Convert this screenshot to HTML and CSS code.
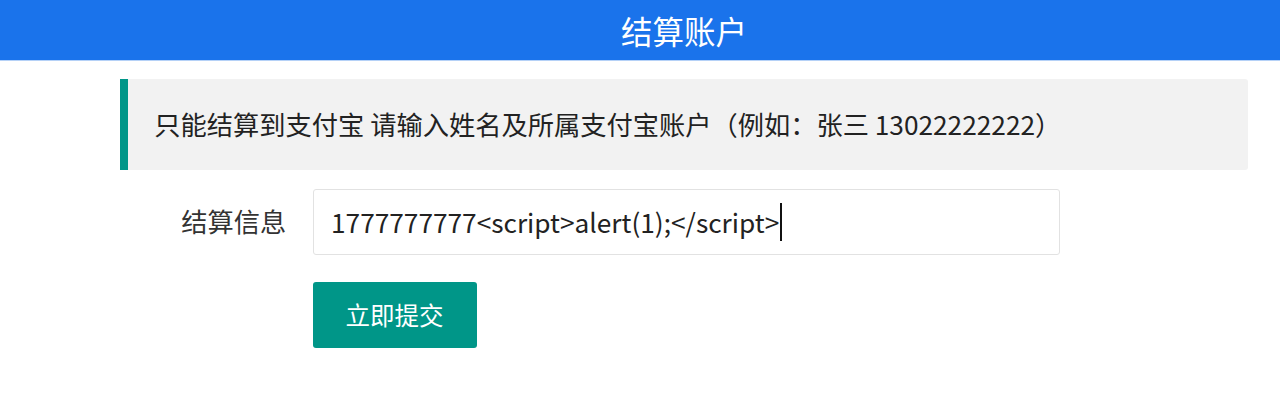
FILE: index.html
```html
<!DOCTYPE html>
<html lang="zh-CN">
<head>
<meta charset="utf-8">
<title>结算账户</title>
<link rel="stylesheet" href="styles.css">
</head>
<body>
<header class="topbar"><div class="topbar-inner">结算账户</div></header>
<main class="content">
  <blockquote class="quote">只能结算到支付宝 请输入姓名及所属支付宝账户（例如：张三 13022222222）</blockquote>
  <form class="form">
    <div class="form-item">
      <label class="form-label">结算信息</label>
      <div class="input-box"><span class="input-text">1777777777&lt;script&gt;alert(1);&lt;/script&gt;</span><span class="caret"></span></div>
    </div>
    <div class="form-item actions">
      <button type="button" class="btn">立即提交</button>
    </div>
  </form>
</main>
</body>
</html>
```
FILE: styles.css
```css
html, body {
  margin: 0;
  padding: 0;
  background: #fff;
}
body {
  font-family: "Noto Sans CJK SC", "Noto Sans", sans-serif;
  color: #333;
}
.topbar {
  height: 60px;
  line-height: 60px;
  background: #1a73eb;
  border-bottom: 1px solid #b5d1f7;
  color: #fff;
  font-size: 31.5px;
  padding: 0 32px 0 120px;
}
.topbar-inner {
  text-align: center;
}
.content {
  padding: 18px 32px 0 120px;
}
.quote {
  margin: 0 0 18.5px 0;
  padding: 26.25px;
  background: #f2f2f2;
  border-left: 8px solid #009688;
  border-radius: 0 3px 3px 0;
  font-size: 26.25px;
  line-height: 38.5px;
  color: #222;
}
.form {
  margin: 0;
}
.form-item {
  display: flex;
  align-items: center;
  margin-bottom: 26.5px;
}
.form-label {
  width: 140px;
  padding: 0 26.25px;
  text-align: right;
  font-size: 26.25px;
  line-height: 35px;
  color: #333;
}
.input-box {
  box-sizing: border-box;
  width: 747px;
  height: 66.5px;
  border: 1px solid #e2e2e2;
  border-radius: 3px;
  padding-left: 17.5px;
  display: flex;
  align-items: center;
  font-size: 26.25px;
  color: #222;
  background: #fff;
}
.caret {
  display: inline-block;
  width: 1.5px;
  height: 38px;
  background: #111;
  margin-left: 1px;
}
.actions {
  padding-left: 192.5px;
}
.btn {
  height: 66.5px;
  padding: 0 33px;
  border: none;
  border-radius: 3px;
  background: #009688;
  color: #fff;
  font-family: "Noto Sans CJK SC", sans-serif;
  font-size: 24.5px;
  cursor: pointer;
}
```
